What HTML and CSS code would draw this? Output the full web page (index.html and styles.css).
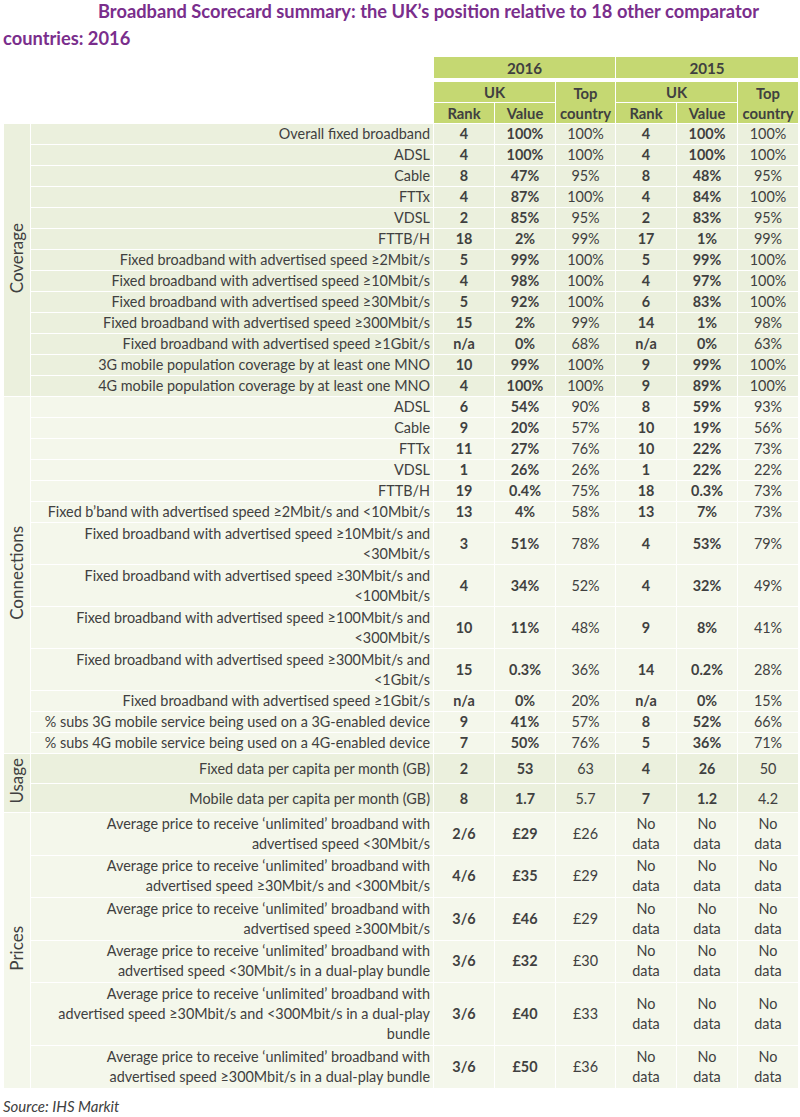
FILE: index.html
```html
<!DOCTYPE html>
<html lang="en">
<head>
<meta charset="utf-8">
<title>Broadband Scorecard summary</title>
<link rel="stylesheet" href="styles.css">
</head>
<body>
<div class="page">
  <p class="title">Broadband Scorecard summary: the UK’s position relative to 18 other comparator<br>countries: 2016</p>
  <table class="score">
    <colgroup>
      <col class="c-sec"><col class="c-label"><col class="c-num"><col class="c-num"><col class="c-top"><col class="c-num"><col class="c-num"><col class="c-num">
    </colgroup>
    <thead>
      <tr class="h1">
        <th class="blank" colspan="2" rowspan="3"></th>
        <th colspan="3">2016</th>
        <th colspan="3">2015</th>
      </tr>
      <tr class="h2">
        <th colspan="2">UK</th>
        <th rowspan="2" class="twoline">Top<br>country</th>
        <th colspan="2">UK</th>
        <th rowspan="2" class="twoline">Top<br>country</th>
      </tr>
      <tr class="h3">
        <th>Rank</th><th>Value</th><th>Rank</th><th>Value</th>
      </tr>
    </thead>
    <tbody class="sec-a">
      <tr><td class="sec" rowspan="13"><span>Coverage</span></td><td class="lbl">Overall fixed broadband</td><td class="b">4</td><td class="b">100%</td><td>100%</td><td class="b">4</td><td class="b">100%</td><td>100%</td></tr>
      <tr><td class="lbl">ADSL</td><td class="b">4</td><td class="b">100%</td><td>100%</td><td class="b">4</td><td class="b">100%</td><td>100%</td></tr>
      <tr><td class="lbl">Cable</td><td class="b">8</td><td class="b">47%</td><td>95%</td><td class="b">8</td><td class="b">48%</td><td>95%</td></tr>
      <tr><td class="lbl">FTTx</td><td class="b">4</td><td class="b">87%</td><td>100%</td><td class="b">4</td><td class="b">84%</td><td>100%</td></tr>
      <tr><td class="lbl">VDSL</td><td class="b">2</td><td class="b">85%</td><td>95%</td><td class="b">2</td><td class="b">83%</td><td>95%</td></tr>
      <tr><td class="lbl">FTTB/H</td><td class="b">18</td><td class="b">2%</td><td>99%</td><td class="b">17</td><td class="b">1%</td><td>99%</td></tr>
      <tr><td class="lbl">Fixed broadband with advertised speed ≥2Mbit/s</td><td class="b">5</td><td class="b">99%</td><td>100%</td><td class="b">5</td><td class="b">99%</td><td>100%</td></tr>
      <tr><td class="lbl">Fixed broadband with advertised speed ≥10Mbit/s</td><td class="b">4</td><td class="b">98%</td><td>100%</td><td class="b">4</td><td class="b">97%</td><td>100%</td></tr>
      <tr><td class="lbl">Fixed broadband with advertised speed ≥30Mbit/s</td><td class="b">5</td><td class="b">92%</td><td>100%</td><td class="b">6</td><td class="b">83%</td><td>100%</td></tr>
      <tr><td class="lbl">Fixed broadband with advertised speed ≥300Mbit/s</td><td class="b">15</td><td class="b">2%</td><td>99%</td><td class="b">14</td><td class="b">1%</td><td>98%</td></tr>
      <tr><td class="lbl">Fixed broadband with advertised speed ≥1Gbit/s</td><td class="b">n/a</td><td class="b">0%</td><td>68%</td><td class="b">n/a</td><td class="b">0%</td><td>63%</td></tr>
      <tr><td class="lbl">3G mobile population coverage by at least one MNO</td><td class="b">10</td><td class="b">99%</td><td>100%</td><td class="b">9</td><td class="b">99%</td><td>100%</td></tr>
      <tr><td class="lbl">4G mobile population coverage by at least one MNO</td><td class="b">4</td><td class="b">100%</td><td>100%</td><td class="b">9</td><td class="b">89%</td><td>100%</td></tr>
    </tbody>
    <tbody class="sec-b">
      <tr><td class="sec" rowspan="13"><span>Connections</span></td><td class="lbl">ADSL</td><td class="b">6</td><td class="b">54%</td><td>90%</td><td class="b">8</td><td class="b">59%</td><td>93%</td></tr>
      <tr><td class="lbl">Cable</td><td class="b">9</td><td class="b">20%</td><td>57%</td><td class="b">10</td><td class="b">19%</td><td>56%</td></tr>
      <tr><td class="lbl">FTTx</td><td class="b">11</td><td class="b">27%</td><td>76%</td><td class="b">10</td><td class="b">22%</td><td>73%</td></tr>
      <tr><td class="lbl">VDSL</td><td class="b">1</td><td class="b">26%</td><td>26%</td><td class="b">1</td><td class="b">22%</td><td>22%</td></tr>
      <tr><td class="lbl">FTTB/H</td><td class="b">19</td><td class="b">0.4%</td><td>75%</td><td class="b">18</td><td class="b">0.3%</td><td>73%</td></tr>
      <tr><td class="lbl">Fixed b’band with advertised speed ≥2Mbit/s and &lt;10Mbit/s</td><td class="b">13</td><td class="b">4%</td><td>58%</td><td class="b">13</td><td class="b">7%</td><td>73%</td></tr>
      <tr class="r2"><td class="lbl">Fixed broadband with advertised speed ≥10Mbit/s and<br>&lt;30Mbit/s</td><td class="b">3</td><td class="b">51%</td><td>78%</td><td class="b">4</td><td class="b">53%</td><td>79%</td></tr>
      <tr class="r2"><td class="lbl">Fixed broadband with advertised speed ≥30Mbit/s and<br>&lt;100Mbit/s</td><td class="b">4</td><td class="b">34%</td><td>52%</td><td class="b">4</td><td class="b">32%</td><td>49%</td></tr>
      <tr class="r2"><td class="lbl">Fixed broadband with advertised speed ≥100Mbit/s and<br>&lt;300Mbit/s</td><td class="b">10</td><td class="b">11%</td><td>48%</td><td class="b">9</td><td class="b">8%</td><td>41%</td></tr>
      <tr class="r2"><td class="lbl">Fixed broadband with advertised speed ≥300Mbit/s and<br>&lt;1Gbit/s</td><td class="b">15</td><td class="b">0.3%</td><td>36%</td><td class="b">14</td><td class="b">0.2%</td><td>28%</td></tr>
      <tr><td class="lbl">Fixed broadband with advertised speed ≥1Gbit/s</td><td class="b">n/a</td><td class="b">0%</td><td>20%</td><td class="b">n/a</td><td class="b">0%</td><td>15%</td></tr>
      <tr><td class="lbl">% subs 3G mobile service being used on a 3G-enabled device</td><td class="b">9</td><td class="b">41%</td><td>57%</td><td class="b">8</td><td class="b">52%</td><td>66%</td></tr>
      <tr><td class="lbl">% subs 4G mobile service being used on a 4G-enabled device</td><td class="b">7</td><td class="b">50%</td><td>76%</td><td class="b">5</td><td class="b">36%</td><td>71%</td></tr>
    </tbody>
    <tbody class="sec-a">
      <tr class="ru"><td class="sec" rowspan="2"><span>Usage</span></td><td class="lbl">Fixed data per capita per month (GB)</td><td class="b">2</td><td class="b">53</td><td>63</td><td class="b">4</td><td class="b">26</td><td>50</td></tr>
      <tr class="ru"><td class="lbl">Mobile data per capita per month (GB)</td><td class="b">8</td><td class="b">1.7</td><td>5.7</td><td class="b">7</td><td class="b">1.2</td><td>4.2</td></tr>
    </tbody>
    <tbody class="sec-b">
      <tr class="rp"><td class="sec" rowspan="6"><span>Prices</span></td><td class="lbl">Average price to receive ‘unlimited’ broadband with<br>advertised speed &lt;30Mbit/s</td><td class="b">2/6</td><td class="b">£29</td><td>£26</td><td>No<br>data</td><td>No<br>data</td><td>No<br>data</td></tr>
      <tr class="rp"><td class="lbl">Average price to receive ‘unlimited’ broadband with<br>advertised speed ≥30Mbit/s and &lt;300Mbit/s</td><td class="b">4/6</td><td class="b">£35</td><td>£29</td><td>No<br>data</td><td>No<br>data</td><td>No<br>data</td></tr>
      <tr class="rp"><td class="lbl">Average price to receive ‘unlimited’ broadband with<br>advertised speed ≥300Mbit/s</td><td class="b">3/6</td><td class="b">£46</td><td>£29</td><td>No<br>data</td><td>No<br>data</td><td>No<br>data</td></tr>
      <tr class="rp"><td class="lbl">Average price to receive ‘unlimited’ broadband with<br>advertised speed &lt;30Mbit/s in a dual-play bundle</td><td class="b">3/6</td><td class="b">£32</td><td>£30</td><td>No<br>data</td><td>No<br>data</td><td>No<br>data</td></tr>
      <tr class="r3"><td class="lbl">Average price to receive ‘unlimited’ broadband with<br>advertised speed ≥30Mbit/s and &lt;300Mbit/s in a dual-play<br>bundle</td><td class="b">3/6</td><td class="b">£40</td><td>£33</td><td>No<br>data</td><td>No<br>data</td><td>No<br>data</td></tr>
      <tr class="rp"><td class="lbl">Average price to receive ‘unlimited’ broadband with<br>advertised speed ≥300Mbit/s in a dual-play bundle</td><td class="b">3/6</td><td class="b">£50</td><td>£36</td><td>No<br>data</td><td>No<br>data</td><td>No<br>data</td></tr>
    </tbody>
  </table>
  <p class="source">Source: IHS Markit</p>
</div>
</body>
</html>
```
FILE: styles.css
```css
html, body {
  margin: 0;
  padding: 0;
  background: #ffffff;
}

.page {
  width: 800px;
  font-family: Lato, "Open Sans", sans-serif;
  color: #404040;
}

.title {
  margin: -2px 0 0 3px;
  font-size: 18.3px;
  font-weight: 700;
  line-height: 27px;
  color: #7a2e8c;
  text-indent: 95px;
  white-space: nowrap;
}

.score {
  margin: 4px 0 0 3px;
  width: 796px;
  table-layout: fixed;
  border-collapse: separate;
  border-spacing: 1px;
  font-size: 14.4px;
  line-height: 20px;
}

.c-sec { width: 26px; }
.c-label { width: 402px; }
.c-num { width: 60px; }
.c-top { width: 59px; }

.score th,
.score td {
  padding: 0;
  text-align: center;
  vertical-align: middle;
  white-space: nowrap;
}

.score th {
  background: #c5d872;
  font-weight: 700;
  font-size: 14.8px;
}

.score th.blank {
  background: transparent;
}

.h1 th {
  height: 21px;
  font-size: 15.2px;
  border-bottom: 3px solid #ffffff;
}

.h2 th { height: 19px; }
.h3 th { height: 20px; }

.score td {
  height: 20px;
}

.sec-a td { background: #ebf0dd; }
.sec-b td { background: #f4f7eb; }

.score td.lbl {
  text-align: right;
  padding-right: 3px;
}

.score td.b {
  font-weight: 700;
}

.score td.sec {
  font-size: 17px;
  padding: 0;
}

.sec span {
  display: inline-block;
  writing-mode: vertical-rl;
  transform: rotate(180deg);
  line-height: 26px;
}

.r2 td { height: 41px; }
.ru td { height: 26.5px; padding-top: 2px; }
.ru td.sec { padding-top: 0; height: 28.5px; }
.rp td { height: 41.5px; }
.r3 td { height: 62px; }

.source {
  margin: 7px 0 0 3px;
  font-size: 15px;
  font-style: italic;
  line-height: 20px;
  color: #404040;
}
```
